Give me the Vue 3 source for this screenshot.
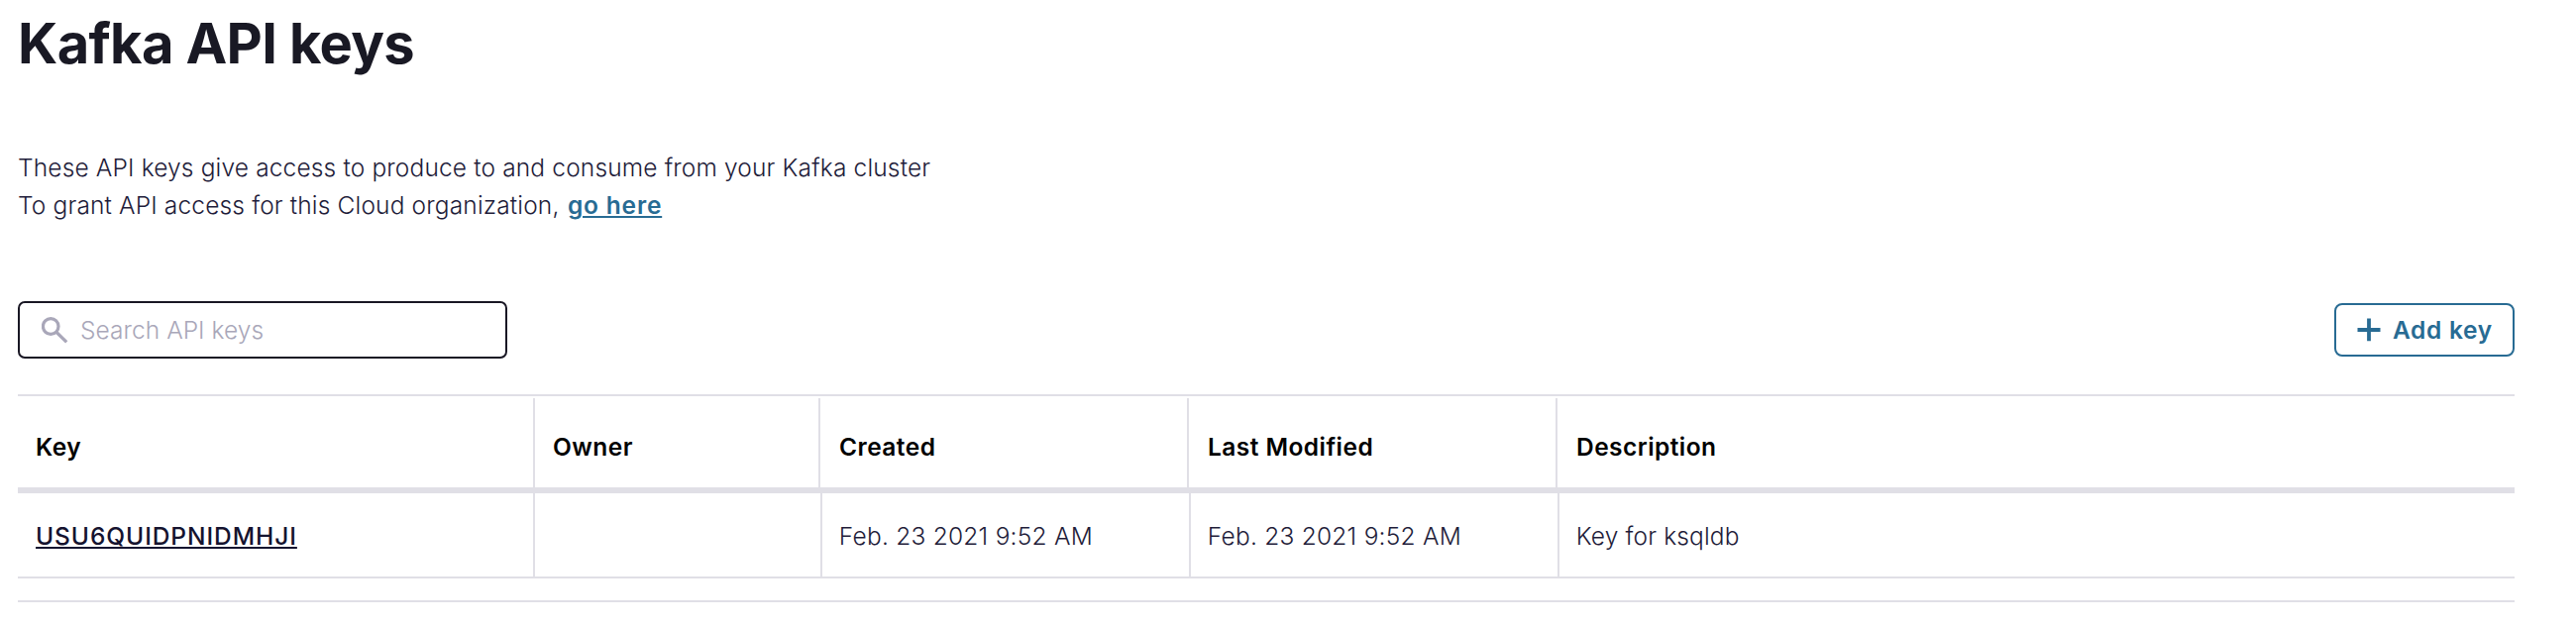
<template>
  <main class="page">
    <h1>Kafka API keys</h1>
    <div class="intro">
      <p>These API keys give access to produce to and consume from your Kafka cluster</p>
      <p>To grant API access for this Cloud organization, <a href="#">go here</a></p>
    </div>
    <div class="bar">
      <div class="search">
        <svg width="28" height="28" viewBox="0 0 28 28" fill="none" stroke="#a9a7b9"><circle cx="9.2" cy="10.5" r="7.8" stroke-width="3.2" /><path d="M14.6 16l10.6 10.4" stroke-width="3.2" /></svg>
        <span>Search API keys</span>
      </div>
      <button class="add">
        <svg width="24" height="24" viewBox="0 0 24 24" stroke="#286b93" stroke-width="3.8"><path d="M12 .6v22.6M.5 12h23" /></svg>
        <span>Add key</span>
      </button>
    </div>
    <div class="table">
      <div class="row head"><div v-for="h in heads" :key="h">{{ h }}</div></div>
      <div class="row body">
        <div v-for="(c, i) in cells" :key="i" :class="{ date: i === 2 || i === 3 }"><a v-if="i === 0" href="#">{{ c }}</a><span v-else>{{ c }}</span></div>
      </div>
    </div>
    <div class="end"></div>
  </main>
</template>

<script setup>
const heads = ['Key', 'Owner', 'Created', 'Last Modified', 'Description']
const cells = ['USU6QUIDPNIDMHJI', '', 'Feb. 23 2021 9:52 AM', 'Feb. 23 2021 9:52 AM', 'Key for ksqldb']
</script>

<style scoped>
.page { box-sizing: border-box; width: 2600px; height: 634px; padding: 0 62px 0 18px; background: #fff; font-family: Inter, sans-serif; font-size: 24.5px; letter-spacing: 0.15px; color: #1f1d3a; overflow: hidden; }
h1 { margin: 0; padding-top: 9px; height: 141px; box-sizing: border-box; font-size: 56px; line-height: 70px; font-weight: 700; letter-spacing: -0.65px; color: #191924; }
.intro { height: 163px; font-weight: 300; padding-top: 9px; box-sizing: border-box; }
.intro p { margin: 0; line-height: 38px; }
a { text-decoration-thickness: 2px; text-underline-offset: 2px; }
.intro a { margin-left: 1.5px; color: #286b93; font-weight: 600; letter-spacing: 0.8px; }
.bar { display: flex; justify-content: space-between; align-items: center; height: 58px; }
.search { box-sizing: border-box; width: 494px; height: 58px; border: 2px solid #191724; border-radius: 7px; display: flex; align-items: center; padding-left: 22px; gap: 11px; color: #a9a7b9; font-weight: 300; letter-spacing: 0.05px; }
.add { box-sizing: border-box; width: 182px; height: 54px; border: 2px solid #286b93; border-radius: 8px; background: #fff; color: #286b93; display: flex; align-items: center; gap: 12px; padding: 0 0 0 21px; font: 600 24.5px Inter, sans-serif; letter-spacing: 0.67px; white-space: nowrap; }
.add svg { flex: none; }
.table { margin-top: 36px; border-top: 2px solid #e0dfe6; padding-top: 2px; }
.row { display: grid; }
.row > div { box-sizing: border-box; display: flex; align-items: center; border-right: 2px solid #e0dfe6; }
.row > div:last-child { border-right: 0; }
.head { grid-template-columns: 522px 288px 372px 372px 1fr; grid-template-rows: 90px; border-bottom: 6px solid #e0dfe6; font-weight: 600; letter-spacing: 0.45px; color: #000; }
.head > div { padding: 8px 0 0 18px; }
.head > div:nth-child(n + 3) { padding-left: 19px; }
.body { grid-template-columns: 522px 290px 372px 372px 1fr; grid-template-rows: 84px; border-bottom: 2px solid #e0dfe6; font-weight: 300; }
.body > div { padding: 2px 0 0 18px; }
.body > div:nth-child(n + 3) { padding-left: 16.8px; }
.body > .date { letter-spacing: 0.24px; }
.body a { color: #15132f; font-weight: 500; letter-spacing: 0.94px; text-decoration-skip-ink: none; }
.end { margin-top: 22px; border-top: 2px solid #e0dfe6; }
</style>
